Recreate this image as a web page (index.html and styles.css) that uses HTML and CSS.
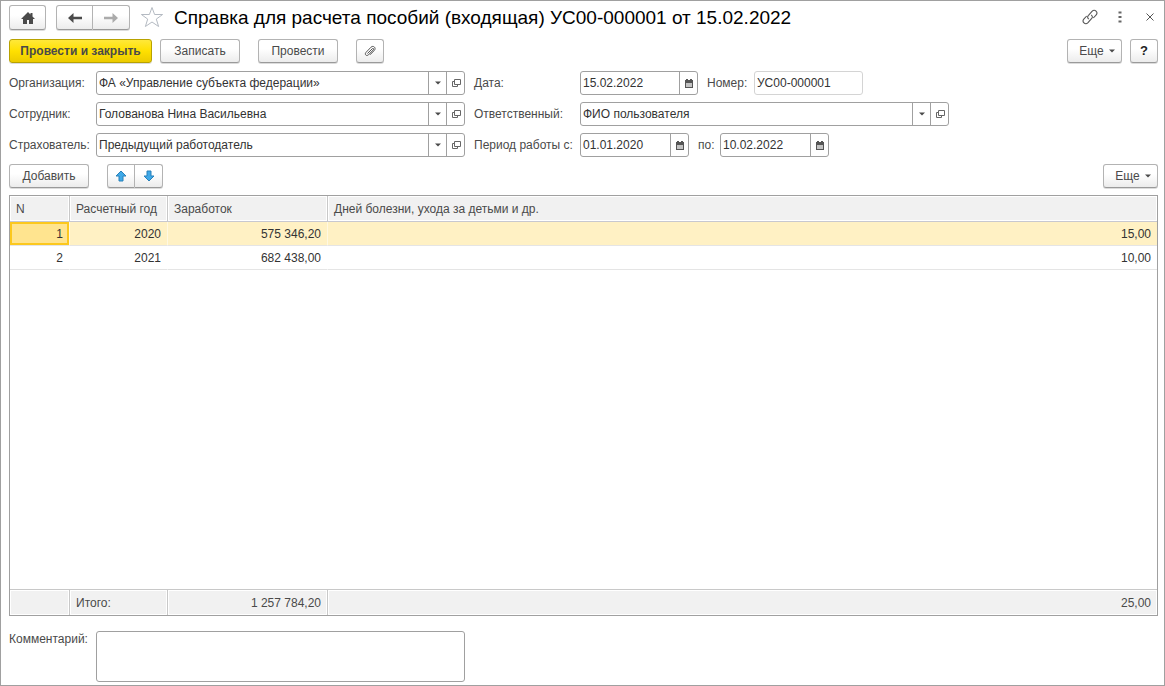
FILE: index.html
```html
<!DOCTYPE html>
<html lang="ru">
<head>
<meta charset="utf-8">
<title>Справка для расчета пособий (входящая)</title>
<link rel="stylesheet" href="styles.css">
</head>
<body>
<svg class="sprite" aria-hidden="true">
  <symbol id="open" viewBox="0 0 10 10"><path d="M3.500 1.500h6v5h-6zM3.500 3.500h-2v5h5v-2" fill="none" stroke="#666"/></symbol>
  <symbol id="caret" viewBox="0 0 6 4"><path d="M0 0.500h6L3 3.500z" fill="#4a4a4a"/></symbol>
  <symbol id="calendar" viewBox="0 0 10 10"><path d="M1 2h1V1h2v1h2V1h2v1h1v8H1z" fill="#555"/><path d="M2 5h6v4H2z" fill="#ddd"/><path d="M2.500 6h1M4.500 6h1M6.500 6h1M2.500 8h1M4.500 8h1M6.500 8h1" stroke="#777"/></symbol>
</svg>
<main class="window">
  <header class="titlebar">
    <button class="btn nav" aria-label="Домой"><svg width="16" height="14" viewBox="0 0 16 14"><path d="M8 1L1 8h2v5h4V9h2v4h4V8h2L12.500 5.500V2h-2v1.500z" fill="#4a4a4a"/></svg></button>
    <div class="group">
      <button class="btn nav" aria-label="Назад"><svg width="14" height="12" viewBox="0 0 14 12"><path d="M0 6l5.500-5v3.700H14v2.600H5.500V11z" fill="#4a4a4a"/></svg></button>
      <button class="btn nav" aria-label="Вперед"><svg width="14" height="12" viewBox="0 0 14 12"><path d="M14 6L8.500 1v3.700H0v2.600h8.500V11z" fill="#ababab"/></svg></button>
    </div>
    <button class="plain star" aria-label="В избранное"><svg width="24" height="22" viewBox="0 0 24 22"><path d="M12 1.500l2.600 7h8l-6.300 4.600 2.300 7.400-6.600-4.500-6.600 4.500 2.300-7.400L1.400 8.500h8z" fill="#fff" stroke="#b4bac2"/></svg></button>
    <h1 class="title">Справка для расчета пособий (входящая) УС00-000001 от 15.02.2022</h1>
    <div class="tools">
      <button class="plain" aria-label="Ссылка"><svg width="16" height="16" viewBox="0 0 16 16"><path d="M6.800 10.200C5.300 8.800 5.300 7.500 6.500 6.300L10 2.400c2.800-2.900 6.600.9 4 3.700L11.300 9M9.200 5.800c1.500 1.400 1.500 2.700.3 3.900L6 13.600c-2.800 2.900-6.600-.9-4-3.700L4.700 7" fill="none" stroke="#555" stroke-width="1.100"/></svg></button>
      <button class="plain dots" aria-label="Меню"><svg width="4" height="12" viewBox="0 0 4 12"><path d="M.5 0.500h3v2h-3zM.5 5h3v2h-3zM.5 9.500h3v2h-3z" fill="#666"/></svg></button>
      <button class="plain close" aria-label="Закрыть"><svg width="8" height="8" viewBox="0 0 8 8"><path d="M.5.5l7 7M7.500.5l-7 7" stroke="#555"/></svg></button>
    </div>
  </header>

  <div class="commands">
    <button class="btn primary">Провести и закрыть</button>
    <button class="btn save">Записать</button>
    <button class="btn post">Провести</button>
    <button class="btn clip" aria-label="Файлы"><svg width="14" height="14" viewBox="0 0 14 14"><path d="M4.500 9.500l4.700-4.700c1-1 2.100.1 1.100 1.100l-4.800 4.900c-2 1.900-4.300-.4-2.500-2.400l5-5.200c2.300-2.300 5.600.8 3.300 3.200L7 10.800" fill="none" stroke="#555"/></svg></button>
    <button class="btn more">Еще <svg width="6" height="4"><use href="#caret"/></svg></button>
    <button class="btn help">?</button>
  </div>

  <form class="fields">
    <label for="org">Организация:</label>
    <div class="field"><input id="org" value="ФА «Управление субъекта федерации»"><button type="button" aria-label="Выбрать"><svg width="6" height="4"><use href="#caret"/></svg></button><button type="button" aria-label="Открыть"><svg width="10" height="10"><use href="#open"/></svg></button></div>
    <label class="second" for="date">Дата:</label>
    <div class="line">
      <div class="field date wide"><input id="date" value="15.02.2022"><button type="button" aria-label="Календарь"><svg width="10" height="10"><use href="#calendar"/></svg></button></div>
      <label for="number">Номер:</label>
      <div class="field date readonly"><input id="number" value="УС00-000001" readonly></div>
    </div>

    <label for="employee">Сотрудник:</label>
    <div class="field"><input id="employee" value="Голованова Нина Васильевна"><button type="button" aria-label="Выбрать"><svg width="6" height="4"><use href="#caret"/></svg></button><button type="button" aria-label="Открыть"><svg width="10" height="10"><use href="#open"/></svg></button></div>
    <label class="second" for="owner">Ответственный:</label>
    <div class="field"><input id="owner" value="ФИО пользователя"><button type="button" aria-label="Выбрать"><svg width="6" height="4"><use href="#caret"/></svg></button><button type="button" aria-label="Открыть"><svg width="10" height="10"><use href="#open"/></svg></button></div>

    <label for="insurer">Страхователь:</label>
    <div class="field"><input id="insurer" value="Предыдущий работодатель"><button type="button" aria-label="Выбрать"><svg width="6" height="4"><use href="#caret"/></svg></button><button type="button" aria-label="Открыть"><svg width="10" height="10"><use href="#open"/></svg></button></div>
    <label class="second" for="from">Период работы с:</label>
    <div class="line">
      <div class="field date"><input id="from" value="01.01.2020"><button type="button" aria-label="Календарь"><svg width="10" height="10"><use href="#calendar"/></svg></button></div>
      <label class="short" for="to">по:</label>
      <div class="field date"><input id="to" value="10.02.2022"><button type="button" aria-label="Календарь"><svg width="10" height="10"><use href="#calendar"/></svg></button></div>
    </div>
  </form>

  <div class="commands rows">
    <button class="btn add">Добавить</button>
    <div class="group">
      <button class="btn move" aria-label="Вверх"><svg width="12" height="12" viewBox="0 0 12 12"><path d="M6 1l5 5H8v5H4V6H1z" fill="#3fa9e8" stroke="#2980b9"/></svg></button>
      <button class="btn move" aria-label="Вниз"><svg width="12" height="12" viewBox="0 0 12 12"><path d="M6 11l5-5H8V1H4v5H1z" fill="#3fa9e8" stroke="#2980b9"/></svg></button>
    </div>
    <button class="btn more">Еще <svg width="6" height="4"><use href="#caret"/></svg></button>
  </div>

  <div class="grid">
    <table>
      <colgroup><col class="c-n"><col class="c-year"><col class="c-sum"><col></colgroup>
      <thead><tr><th>N</th><th>Расчетный год</th><th>Заработок</th><th>Дней болезни, ухода за детьми и др.</th></tr></thead>
      <tbody>
        <tr class="selected"><td class="current">1</td><td>2020</td><td>575 346,20</td><td>15,00</td></tr>
        <tr><td>2</td><td>2021</td><td>682 438,00</td><td>10,00</td></tr>
        <tr class="rest"><td colspan="4"></td></tr>
      </tbody>
      <tfoot><tr><td></td><td class="total">Итого:</td><td>1 257 784,20</td><td>25,00</td></tr></tfoot>
    </table>
  </div>

  <div class="comment">
    <label for="comment">Комментарий:</label>
    <textarea id="comment"></textarea>
  </div>
</main>
</body>
</html>
```
FILE: styles.css
```css
* { box-sizing: border-box; }
body { margin: 0; background: #fff; }
body, button, input, textarea { font: 12px/16px "Liberation Sans", Arial, sans-serif; color: #4a4a4a; }
svg { display: block; flex: none; }
.sprite { position: absolute; width: 0; height: 0; }

.window {
  display: flex;
  flex-direction: column;
  height: 100vh;
  min-height: 480px;
  padding: 4px 6px 3px 8px;
  border: 1px solid #a0a0a0;
}

.btn {
  display: flex;
  align-items: center;
  justify-content: center;
  height: 24px;
  padding: 0 12px;
  border: 1px solid #b3b3b3;
  border-bottom-color: #9a9a9a;
  border-radius: 3px;
  background: linear-gradient(#fff 40%, #ececec);
  box-shadow: 0 1px 0 #dcdcdc;
  white-space: nowrap;
}
.group { display: flex; }
.group .btn:first-child { border-radius: 3px 0 0 3px; }
.group .btn:last-child { border-radius: 0 3px 3px 0; border-left: 0; }
.plain { display: flex; padding: 0; border: 0; background: none; }

.titlebar { display: flex; align-items: center; gap: 10px; height: 25px; }
.nav { width: 37px; height: 25px; padding: 0; }
.title { margin: 0; font-size: 19px; line-height: 24px; font-weight: 400; color: #000; white-space: nowrap; }
.titlebar .star { padding-bottom: 2px; }
.tools { display: flex; align-items: center; margin-left: auto; padding: 0 4px 2px 0; }
.dots { margin: 0 24px 0 20px; }

.commands { display: flex; margin-top: 9px; }
.rows { margin-top: 7px; }
.primary { min-width: 143px; margin-right: 8px; padding: 0 10px; border-color: #b8a200; background: linear-gradient(#ffe83a, #ffe000 50%, #eccb00); font-weight: 700; }
.save, .post, .add { min-width: 80px; margin-right: 18px; }
.clip { width: 28px; padding: 0; }
.more { gap: 5px; width: 55px; margin-left: auto; padding: 0 6px 0 11px; }
.help { width: 28px; margin-left: 8px; padding: 0; font-size: 13px; font-weight: 700; color: #222; }
.move { width: 28px; padding: 0; }

.fields {
  display: grid;
  grid-template-columns: 87px minmax(0, 369px) 115px minmax(0, 369px);
  row-gap: 7px;
  align-items: center;
  margin-top: 8px;
}
label { white-space: nowrap; }
.second { padding-left: 9px; }
.line { display: flex; align-items: center; gap: 9px; }
.line label { width: 38px; }
.line .short { width: 13px; }
.field { display: flex; height: 24px; border: 1px solid #a0a0a0; border-radius: 3px; background: #fff; }
.field input { flex: 1; min-width: 0; padding: 0 2px; border: 0; background: none; color: #333; outline: 0; }
.field button { display: flex; align-items: center; justify-content: center; width: 18px; padding: 0; border: 0; border-left: 1px solid #a0a0a0; background: none; }
.date { width: 109px; }
.wide { width: 118px; }
.readonly { border-color: #d4d4d4; }

.grid { flex: 1; min-height: 0; margin-top: 7px; border: 1px solid #a0a0a0; }
table { width: 100%; height: 100%; border-collapse: separate; border-spacing: 0; table-layout: fixed; }
.c-n { width: 60px; }
.c-year { width: 98px; }
.c-sum { width: 160px; }
th, td { padding: 0 6px; text-align: right; white-space: nowrap; }
th { height: 26px; border-bottom: 1px solid #c8c8d0; text-align: left; font-weight: 400; }
th, tfoot td { border-right: 1px solid #c8c8c8; background: #f1f1f1; box-shadow: inset 0 0 0 1px #fff; }
tbody td { height: 24px; border-bottom: 1px solid #e5e5e5; border-right: 1px solid transparent; color: #333; }
tfoot td { height: 26px; border-top: 1px solid #c8c8c8; }
th:last-child, td:last-child { border-right: 0; }
tbody .rest td { height: auto; border: 0; }
.selected td { background: #fff1c4; border-right-color: #fff8e2; }
.selected .current { background: #ffe48f; box-shadow: inset 0 0 0 2px #fcc81e; }
.total { text-align: left; }

.comment { display: grid; grid-template-columns: 87px minmax(0, 369px); margin-top: 15px; }
.comment textarea { height: 51px; border: 1px solid #a0a0a0; border-radius: 3px; resize: none; }
```
